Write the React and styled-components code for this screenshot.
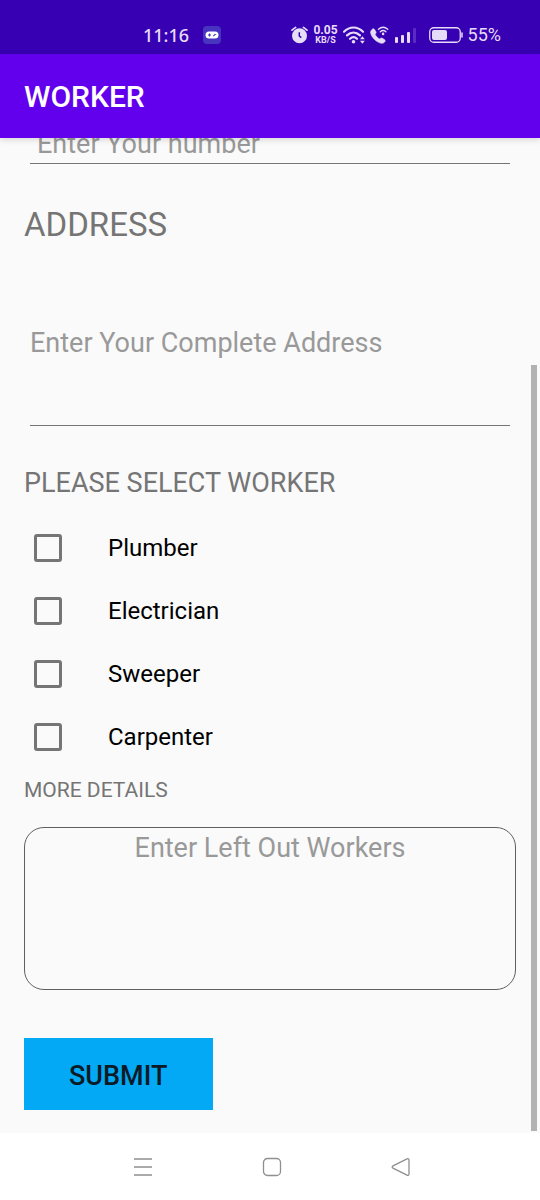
import React from 'react';
import styled, { createGlobalStyle } from 'styled-components';

const GlobalStyle = createGlobalStyle`
  *, *::before, *::after { box-sizing: border-box; }
  body {
    margin: 0;
    background: #fafafa;
    font-family: Roboto, "Liberation Sans", sans-serif;
  }
`;

const Screen = styled.div`
  display: flex;
  flex-direction: column;
  min-height: 100vh;
`;

const StatusBar = styled.div`
  display: flex;
  align-items: center;
  justify-content: space-between;
  height: 54px;
  padding: 15px 39px 0 143px;
  background: #3700b3;
  color: #e6dcf8;
`;

const StatusGroup = styled.div`
  display: flex;
  align-items: center;
  gap: ${({ $gap }) => $gap}px;
`;

const Clock = styled.span`
  font-family: "Noto Sans", Roboto, sans-serif;
  font-weight: 500;
  font-size: 18px;
  line-height: 24px;
`;

const Speed = styled.span`
  display: flex;
  flex-direction: column;
  align-items: center;
  font-weight: 700;
  font-size: 12px;
  line-height: 12px;

  small {
    font-size: 9px;
    line-height: 9px;
  }
`;

const Battery = styled.span`
  display: flex;
  align-items: center;
  gap: 5px;
  margin-left: 8px;
  font-size: 18px;
  line-height: 24px;
`;

const AppBar = styled.header`
  display: flex;
  align-items: center;
  height: 84px;
  padding: 2px 24px 0;
  background: #6200ee;
  color: #fff;
  box-shadow: 0 2px 6px rgba(0, 0, 0, 0.14);
  z-index: 1;
`;

const Title = styled.h1`
  margin: 0;
  font-size: 30px;
  font-weight: 500;
  line-height: 36px;
`;

const ScrollArea = styled.main`
  position: relative;
  flex: 1;
  overflow: hidden;
`;

const ScrollThumb = styled.div`
  position: absolute;
  top: 227px;
  right: 3px;
  bottom: 2px;
  width: 6px;
  background: #b2b2b2;
`;

const Form = styled.form`
  display: flex;
  flex-direction: column;
  margin-top: -22px;
  padding: 0 24px 20px;
`;

const placeholder = `
  color: #000;
  font-family: inherit;
  font-size: 27px;
  line-height: 32px;
  background: transparent;
  outline: none;
  &::placeholder { color: #999; opacity: 1; }
`;

const NumberInput = styled.input`
  ${placeholder}
  height: 48px;
  margin: 0 6px;
  padding: 8px 7px 0;
  border: 0;
  border-bottom: 1px solid #757575;
`;

const AddressInput = styled.textarea`
  ${placeholder}
  display: block;
  height: 180px;
  margin: 0 6px;
  padding: 81px 0 0;
  border: 0;
  border-bottom: 1px solid #757575;
  resize: none;
`;

const DetailsInput = styled.textarea`
  ${placeholder}
  display: block;
  height: 163px;
  padding: 4px 16px;
  border: 1px solid #5f5f5f;
  border-radius: 20px;
  text-align: center;
  resize: none;
`;

const Label = styled.label`
  margin-top: ${({ $top }) => $top}px;
  margin-bottom: ${({ $bottom }) => $bottom}px;
  color: #757575;
  font-size: ${({ $size }) => $size}px;
  line-height: 40px;
`;

const Workers = styled.fieldset`
  margin: 37px 0 0;
  padding: 0;
  border: 0;
`;

const Legend = styled.legend`
  margin-bottom: 13px;
  padding: 0;
  color: #757575;
  font-size: 27px;
  line-height: 40px;
`;

const Option = styled.label`
  display: flex;
  align-items: center;
  gap: 46px;
  height: 63px;
  padding-left: 10px;
  color: #000;
  font-size: 24px;
  line-height: 28px;
`;

const Checkbox = styled.input`
  appearance: none;
  flex: none;
  width: 28px;
  height: 28px;
  margin: 0;
  border: 3px solid #757575;
  border-radius: 3px;

  &:checked { background: #03dac5; border-color: #03dac5; }
`;

const Submit = styled.button`
  align-self: flex-start;
  height: 72px;
  margin-top: 48px;
  padding: 3px 46px 0 45px;
  border: 0;
  background: #03a9f4;
  color: #0b1a26;
  font-family: inherit;
  font-size: 27px;
  font-weight: 500;
  line-height: 32px;
`;

const NavBar = styled.nav`
  display: flex;
  align-items: center;
  justify-content: center;
  gap: 105px;
  height: 67px;
  padding-left: 3px;
  background: #fff;
`;

const NavButton = styled.button`
  display: flex;
  align-items: center;
  justify-content: center;
  width: 24px;
  height: 24px;
  padding: 0;
  border: 0;
  background: none;
  color: #8f8f8f;
`;

const GameIcon = () => (
  <svg width="18" height="18" viewBox="0 0 18 18">
    <rect width="18" height="18" rx="4" fill="#4735c0" />
    <rect x="2.5" y="5.5" width="13" height="7" rx="3.5" fill="#fff" />
    <path d="M5 9h3M6.500 7.600v2.800M10.300 10.200l1.800-1.800M12.600 8v.8" stroke="#4735c0" strokeWidth="1.100" />
  </svg>
);

const AlarmIcon = () => (
  <svg width="17" height="18" viewBox="0 0 17 18" fill="none" stroke="currentColor">
    <circle cx="8.500" cy="9.700" r="7.500" fill="currentColor" stroke="none" />
    <path d="M1 4.200l3.600-2.800M16 4.200l-3.600-2.800" strokeWidth="1.700" strokeLinecap="round" />
    <path d="M8.300 6.300v3.700l2 1.600" stroke="#3700b3" strokeWidth="1.500" />
  </svg>
);

const WifiIcon = () => (
  <svg width="22" height="18" viewBox="0 0 22 18" fill="none" stroke="currentColor">
    <path d="M1 5.700C6.500.1 14.500.1 20 5.700" strokeWidth="2.200" strokeLinecap="round" />
    <path d="M4 9.400c4-3.900 9-3.900 13 0" strokeWidth="2.200" strokeLinecap="round" />
    <path d="M7 12.800c2.300-2.100 4.700-2.100 7 0" strokeWidth="2.200" strokeLinecap="round" />
    <circle cx="10.500" cy="15.800" r="1.800" fill="currentColor" stroke="none" />
    <path d="M17 13.200l2.400-3 2.400 3zM17 14.700l2.400 3 2.400-3z" fill="currentColor" stroke="none" />
  </svg>
);

const CallIcon = () => (
  <svg width="19" height="18" viewBox="0 0 19 18" fill="none" stroke="currentColor">
    <path
      d="M2 3.400c1-.9 2-.8 2.600.2l1.300 2.100c.5.900.2 1.600-.8 2.500.9 2.100 2.500 3.800 4.700 4.800.9-1 1.700-1.300 2.600-.7l2 1.300c1 .7 1.100 1.600.2 2.500-1.400 1.500-3.200 1.600-5.500.5C5 14.700 2 11.500.8 7.800.3 6 .8 4.500 2 3.400z"
      fill="currentColor"
      stroke="currentColor"
      strokeWidth="0.600"
    />
    <path d="M8.500 3.300c2.800-2.500 6.400-2.500 9.200 0M10.300 5.800c1.700-1.500 3.900-1.500 5.600 0" strokeWidth="1.400" strokeLinecap="round" />
    <circle cx="13.100" cy="7.900" r="1.300" fill="currentColor" stroke="none" />
  </svg>
);

const SignalIcon = () => (
  <svg width="22" height="18" viewBox="0 0 22 18" fill="currentColor">
    <rect x="1" y="11" width="3" height="6" rx="1" />
    <rect x="7" y="9" width="3" height="8" rx="1" />
    <rect x="13" y="6" width="3" height="11" rx="1" />
    <rect x="19" y="2" width="3" height="15" rx="1" opacity="0.2" />
  </svg>
);

const BatteryIcon = () => (
  <svg width="34" height="16" viewBox="0 0 34 16">
    <rect x="0.750" y="0.750" width="30.500" height="14.500" rx="4" fill="none" stroke="currentColor" strokeWidth="1.300" />
    <rect x="3" y="3" width="15" height="10" rx="2" fill="currentColor" />
    <path d="M33 6v4" stroke="currentColor" strokeWidth="1.500" strokeLinecap="round" />
  </svg>
);

const MenuIcon = () => (
  <svg width="20" height="20" viewBox="0 0 20 20" stroke="currentColor" strokeWidth="1.500">
    <path d="M1 2h18M1 10h18M1 18h18" />
  </svg>
);

const HomeIcon = () => (
  <svg width="20" height="20" viewBox="0 0 20 20" fill="none" stroke="currentColor" strokeWidth="1.300">
    <rect x="1.500" y="1.500" width="17" height="17" rx="4" />
  </svg>
);

const BackIcon = () => (
  <svg width="20" height="20" viewBox="0 0 20 20" fill="none" stroke="currentColor" strokeWidth="1.300">
    <path d="M2 8.900L16 1.900c1.200-.6 2 0 2 1.100v14c0 1.100-.8 1.700-2 1.100L2 11.100c-1.100-.6-1.100-1.600 0-2.200z" />
  </svg>
);

const workers = ['Plumber', 'Electrician', 'Sweeper', 'Carpenter'];

export default function App() {
  return (
    <Screen>
      <GlobalStyle />
      <StatusBar>
        <StatusGroup $gap={14}>
          <Clock>11:16</Clock>
          <GameIcon />
        </StatusGroup>
        <StatusGroup $gap={5}>
          <AlarmIcon />
          <Speed>
            0.05
            <small>KB/S</small>
          </Speed>
          <WifiIcon />
          <CallIcon />
          <SignalIcon />
          <Battery>
            <BatteryIcon />
            55%
          </Battery>
        </StatusGroup>
      </StatusBar>
      <AppBar>
        <Title>WORKER</Title>
      </AppBar>
      <ScrollArea>
        <Form onSubmit={(event) => event.preventDefault()}>
          <NumberInput type="tel" placeholder="Enter Your number" aria-label="Number" />
          <Label htmlFor="address" $size={33} $top={41} $bottom={1}>ADDRESS</Label>
          <AddressInput id="address" placeholder="Enter Your Complete Address" />
          <Workers>
            <Legend>PLEASE SELECT WORKER</Legend>
            {workers.map((name) => (
              <Option key={name}>
                <Checkbox type="checkbox" name="worker" value={name} />
                {name}
              </Option>
            ))}
          </Workers>
          <Label htmlFor="details" $size={21} $top={2} $bottom={17}>MORE DETAILS</Label>
          <DetailsInput id="details" placeholder="Enter Left Out Workers" />
          <Submit type="submit">SUBMIT</Submit>
        </Form>
        <ScrollThumb />
      </ScrollArea>
      <NavBar>
        <NavButton type="button" aria-label="Recent apps"><MenuIcon /></NavButton>
        <NavButton type="button" aria-label="Home"><HomeIcon /></NavButton>
        <NavButton type="button" aria-label="Back"><BackIcon /></NavButton>
      </NavBar>
    </Screen>
  );
}
